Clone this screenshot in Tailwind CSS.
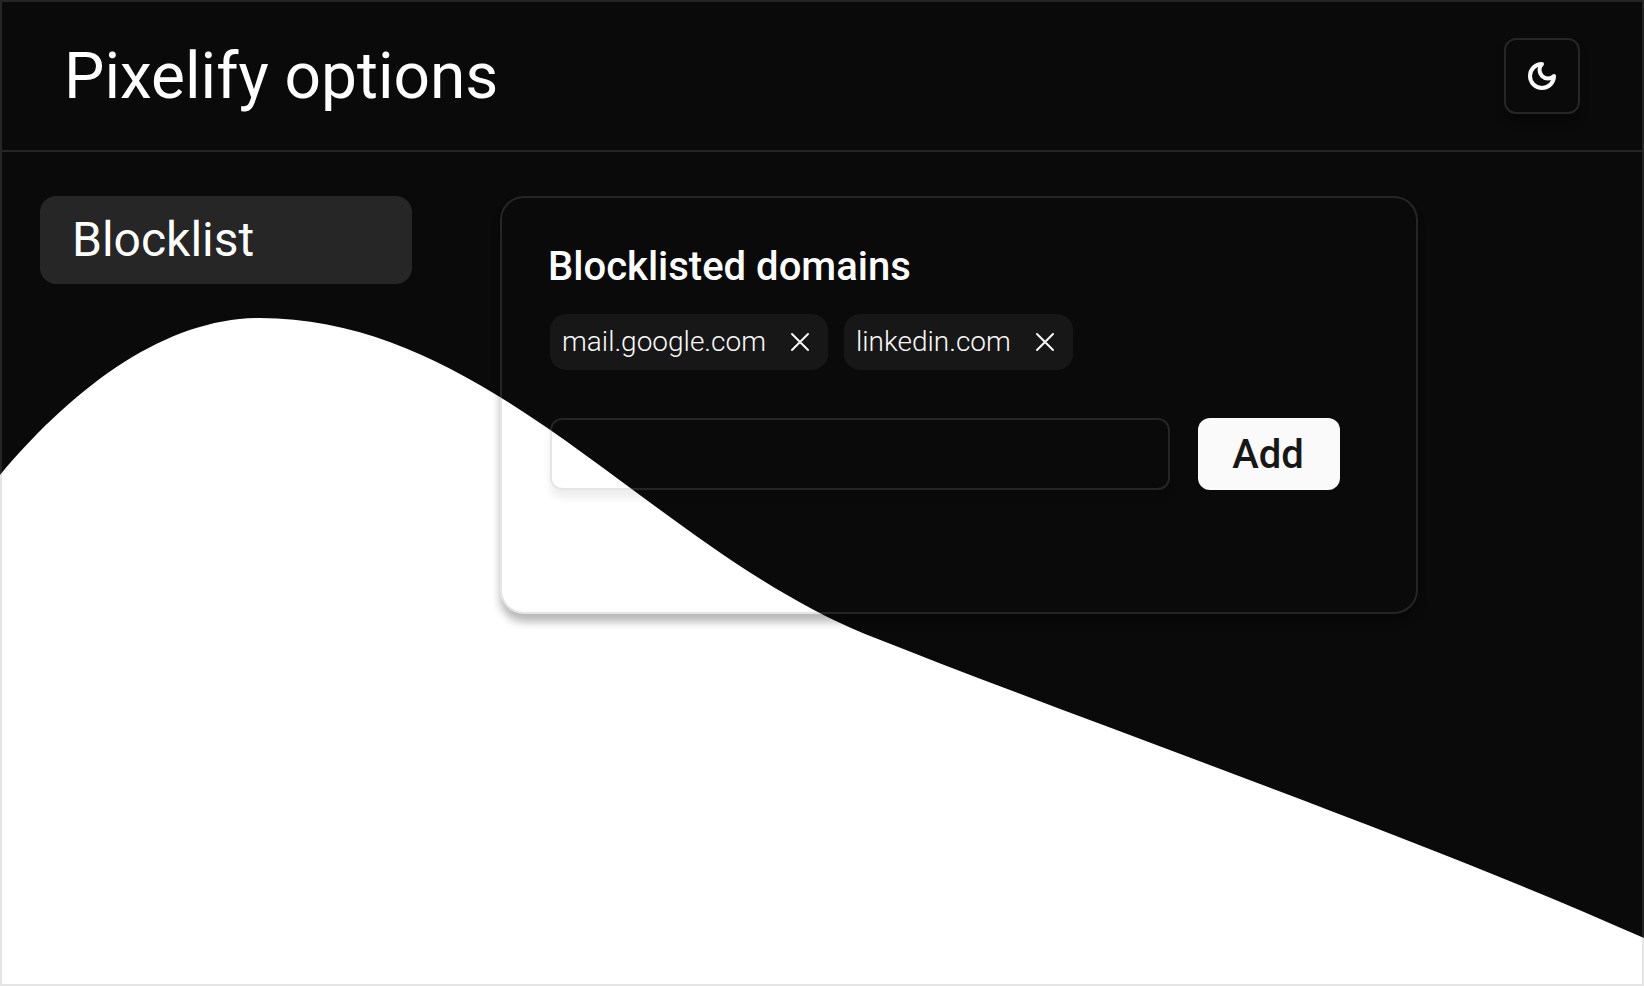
<!DOCTYPE html>
<html lang="en">
<head>
<meta charset="utf-8">
<meta name="viewport" content="width=device-width, initial-scale=1">
<title>Pixelify options</title>
<script src="https://cdn.jsdelivr.net/npm/@tailwindcss/browser@4"></script>
</head>
<body class="isolate bg-white font-['Roboto',sans-serif] text-white">
<div class="relative flex min-h-screen flex-col border-2 border-[#898989]/22">
  <!-- Dark area with a curved lower edge -->
  <svg class="absolute -inset-0.5 -z-10 h-[calc(100%+4px)] w-[calc(100%+4px)]" viewBox="0 0 1644 986" preserveAspectRatio="none" aria-hidden="true">
    <path fill="#0a0a0a" d="M0 0H1644V938C1400 830 1120 735 865 634C650 545 490 318 260 318C170 318 80 380 0 475Z"/>
  </svg>

  <header class="flex items-center justify-between border-b-2 border-[#898989]/22 px-[62px] py-9">
    <h1 class="pt-0.5 text-[64px] leading-[72px]">Pixelify options</h1>
    <button type="button" aria-label="Toggle theme" class="flex size-[76px] items-center justify-center rounded-xl border-2 border-[#262626] text-neutral-50 shadow-[0_8px_8px_rgba(0,0,0,0.25)]">
      <svg class="size-8" viewBox="0 0 24 24" fill="none" stroke="currentColor" stroke-width="3" stroke-linecap="round" stroke-linejoin="round" aria-hidden="true"><path d="M12 3a6 6 0 0 0 9 9 9 9 0 1 1-9-9Z"/></svg>
    </button>
  </header>

  <div class="flex items-start gap-[88px] px-[38px] pt-11">
    <nav class="w-[372px] shrink-0">
      <a href="#blocklist" class="flex h-[88px] items-center rounded-2xl bg-[#262626] px-8 text-5xl">Blocklist</a>
    </nav>

    <main id="blocklist" class="max-w-[918px] min-w-0 flex-1 rounded-3xl border-2 border-[#898989]/22 pt-11 pr-[76px] pb-[122px] pl-[46px] shadow-[0_8px_8px_rgba(0,0,0,0.28)]">
      <h2 class="pt-px text-[40px] leading-12 font-medium">Blocklisted domains</h2>
      <div class="pl-0.5">
        <ul class="mt-[23px] flex flex-wrap gap-4 text-[28px] font-light text-neutral-50">
          <li class="flex h-14 items-center gap-[18px] rounded-2xl bg-[#171717] px-3">
            <span>mail.google.com</span>
            <button type="button" aria-label="Remove mail.google.com"><svg class="size-8" viewBox="0 0 32 32" fill="none" stroke="currentColor" stroke-width="2" stroke-linecap="round" aria-hidden="true"><path d="M8 8l16 16M24 8L8 24"/></svg></button>
          </li>
          <li class="flex h-14 items-center gap-[18px] rounded-2xl bg-[#171717] px-3">
            <span>linkedin.com</span>
            <button type="button" aria-label="Remove linkedin.com"><svg class="size-8" viewBox="0 0 32 32" fill="none" stroke="currentColor" stroke-width="2" stroke-linecap="round" aria-hidden="true"><path d="M8 8l16 16M24 8L8 24"/></svg></button>
          </li>
        </ul>
        <form class="mt-12 flex gap-7">
          <input type="text" aria-label="Domain" class="h-[72px] min-w-0 flex-1 rounded-xl border-2 border-[#898989]/22 px-6 text-[28px] shadow-[0_8px_8px_rgba(0,0,0,0.07)]">
          <button type="button" class="h-[72px] w-[142px] rounded-xl bg-neutral-50 pt-0.5 pr-0.5 text-[40px] leading-12 font-medium text-neutral-900">Add</button>
        </form>
      </div>
    </main>
  </div>
</div>
</body>
</html>
